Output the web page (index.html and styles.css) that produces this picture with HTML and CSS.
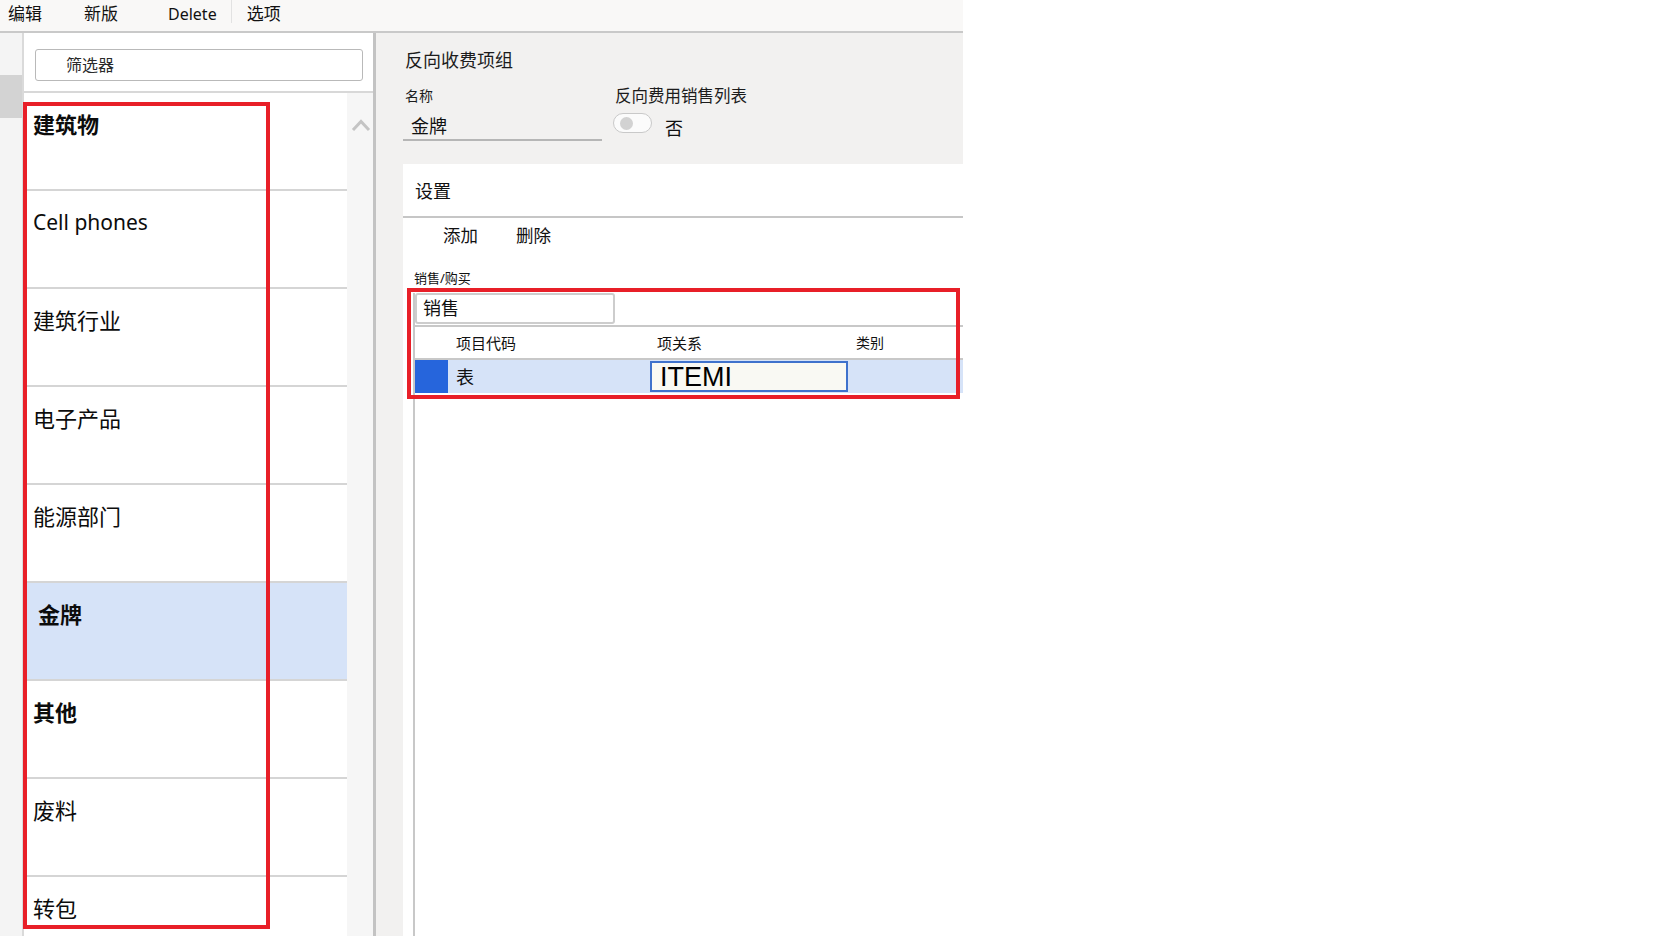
FILE: index.html
```html
<!DOCTYPE html>
<html lang="zh-CN">
<head>
<meta charset="utf-8">
<title>反向收费项组</title>
<link rel="stylesheet" href="styles.css">
</head>
<body>
<div class="app">
  <header class="topbar">
    <span class="tb-item tb-edit">编辑</span>
    <span class="tb-item tb-new">新版</span>
    <span class="tb-item tb-delete">Delete</span>
    <span class="tb-sep"></span>
    <span class="tb-item tb-options">选项</span>
  </header>

  <div class="main">
    <div class="rail"><div class="rail-mark"></div></div>

    <aside class="list-panel">
      <div class="filter">筛选器</div>
      <div class="list">
        <ul class="rows">
          <li class="row strong">建筑物</li>
          <li class="row latin">Cell phones</li>
          <li class="row">建筑行业</li>
          <li class="row">电子产品</li>
          <li class="row">能源部门</li>
          <li class="row strong selected">金牌</li>
          <li class="row strong">其他</li>
          <li class="row">废料</li>
          <li class="row">转包</li>
        </ul>
        <div class="scrollbar">
          <svg class="scroll-up" width="20" height="15" viewBox="0 0 20 15">
            <polyline points="2,12 10,3.5 18,12" fill="none" stroke="#c4c4c4" stroke-width="3"/>
          </svg>
        </div>
      </div>
    </aside>

    <section class="detail">
      <div class="head">
        <div class="head-title">反向收费项组</div>
        <div class="fields">
          <div class="field field-name">
            <div class="field-label">名称</div>
            <div class="field-value">金牌</div>
          </div>
          <div class="field field-toggle">
            <div class="field-label toggle-label">反向费用销售列表</div>
            <div class="toggle-row">
              <span class="toggle"><span class="knob"></span></span>
              <span class="toggle-text">否</span>
            </div>
          </div>
        </div>
      </div>

      <div class="card">
        <div class="card-title">设置</div>
        <div class="actions">
          <span class="action">添加</span>
          <span class="action">删除</span>
        </div>
        <div class="grid-caption">销售/购买</div>
        <div class="grid">
          <div class="grid-filter">
            <div class="dropdown">销售</div>
          </div>
          <div class="grid-head">
            <div class="col col-sel"></div>
            <div class="col col-code">项目代码</div>
            <div class="col col-rel">项关系</div>
            <div class="col col-cat">类别</div>
          </div>
          <div class="grid-row">
            <div class="col col-sel marker"></div>
            <div class="col col-code cell-text">表</div>
            <div class="col col-rel"><div class="cell-input">ITEMI</div></div>
            <div class="col col-cat"></div>
          </div>
        </div>
      </div>
    </section>
  </div>

  <div class="callout callout-list"></div>
  <div class="callout callout-grid"></div>
</div>
</body>
</html>
```

FILE: styles.css
```css
* {
  box-sizing: border-box;
}

html, body {
  margin: 0;
  padding: 0;
  background: #ffffff;
}

body {
  width: 1675px;
  height: 936px;
  overflow: hidden;
  font-family: "Noto Sans", "Noto Sans CJK SC", sans-serif;
  color: #111111;
}

.app {
  position: relative;
  width: 963px;
  height: 936px;
  display: flex;
  flex-direction: column;
}

/* ---------- command bar ---------- */
.topbar {
  height: 33px;
  flex: none;
  display: flex;
  align-items: flex-start;
  background: #f9f8f7;
  border-bottom: 2px solid #c9c9c9;
  font-size: 17px;
  line-height: 22px;
}

.tb-item {
  padding-top: 3px;
  white-space: nowrap;
}

.tb-edit { margin-left: 8px; }
.tb-new { margin-left: 42px; }
.tb-delete { margin-left: 50px; font-size: 16px; }
.tb-options { margin-left: 15px; }

.tb-sep {
  width: 1px;
  height: 23px;
  margin-left: 14px;
  background: #e2e2e2;
}

/* ---------- body ---------- */
.main {
  flex: 1;
  display: flex;
  min-height: 0;
}

.rail {
  width: 22px;
  flex: none;
  background: #f4f4f4;
}

.rail-mark {
  margin-top: 42px;
  height: 43px;
  background: #d3d3d3;
}

/* ---------- list panel ---------- */
.list-panel {
  width: 354px;
  flex: none;
  display: flex;
  flex-direction: column;
  background: #ffffff;
  border-left: 2px solid #dadada;
  border-right: 3px solid #c3c3c3;
}

.filter {
  margin: 16px 10px 0 11px;
  height: 32px;
  flex: none;
  border: 1px solid #b9b9b9;
  border-radius: 3px;
  padding-left: 30px;
  font-size: 16px;
  line-height: 30px;
  color: #2a2a2a;
}

.list {
  margin-top: 10px;
  flex: 1;
  min-height: 0;
  display: flex;
  border-top: 2px solid #d8d8d8;
  overflow: hidden;
}

.rows {
  list-style: none;
  margin: 0;
  padding: 0;
  width: 323px;
  flex: none;
  background: #ffffff;
}

.row {
  height: 98px;
  padding: 17px 0 0 9px;
  border-bottom: 2px solid #d5d5d5;
  font-size: 22px;
  line-height: 28px;
  font-weight: 400;
  color: #0c0c0c;
  white-space: nowrap;
}

.row.latin { font-size: 21px; }
.row.strong { font-weight: 700; }

.row.selected {
  background: #d6e3f8;
  padding-left: 14px;
}

.scrollbar {
  flex: 1;
  background: #f6f6f6;
}

.scroll-up {
  display: block;
  margin: 25px 0 0 4px;
}

/* ---------- detail ---------- */
.detail {
  flex: 1;
  min-width: 0;
  display: flex;
  flex-direction: column;
  background: #f2f1f0;
}

.head {
  height: 131px;
  flex: none;
  padding-left: 27px;
}

.head-title {
  margin-top: 15px;
  padding-left: 2px;
  font-size: 18px;
  line-height: 24px;
  color: #1c1c1c;
}

.fields {
  display: flex;
  margin-top: 14px;
}

.field-name {
  width: 199px;
}

.field-label {
  padding-left: 2px;
  font-size: 14px;
  line-height: 20px;
  color: #1c1c1c;
}

.field-value {
  margin-top: 7px;
  height: 28px;
  padding-left: 8px;
  font-size: 18px;
  line-height: 26px;
  border-bottom: 2px solid #b6b6b6;
}

.field-toggle {
  margin-left: 11px;
}

.toggle-label {
  font-size: 16.5px;
}

.toggle-row {
  display: flex;
  align-items: flex-start;
  margin-top: 7px;
}

.toggle {
  width: 39px;
  height: 20px;
  border: 1.5px solid #c9c9c9;
  border-radius: 10px;
  background: #fbfbfb;
  display: flex;
  align-items: center;
  padding-left: 5.5px;
}

.knob {
  width: 13px;
  height: 13px;
  border-radius: 50%;
  background: #d2d2d2;
}

.toggle-text {
  margin: 3px 0 0 13px;
  font-size: 18px;
  line-height: 24px;
}

/* ---------- settings card ---------- */
.card {
  flex: 1;
  margin-left: 27px;
  background: #ffffff;
  display: flex;
  flex-direction: column;
  min-height: 0;
}

.card-title {
  height: 54px;
  flex: none;
  padding: 15px 0 0 12px;
  font-size: 18px;
  line-height: 24px;
  border-bottom: 2px solid #c6c6c6;
}

.actions {
  display: flex;
  margin-top: 5px;
  padding-left: 40px;
  font-size: 17.5px;
  line-height: 24px;
}

.action + .action {
  margin-left: 38px;
}

.grid-caption {
  margin-top: 22px;
  padding-left: 11px;
  font-size: 13px;
  line-height: 18px;
}

.grid {
  flex: 1;
  margin: 6px 0 0 10px;
  border-left: 2px solid #c8c8c8;
  display: flex;
  flex-direction: column;
}

.grid-filter {
  height: 34px;
  flex: none;
  border-bottom: 2px solid #c8c8c8;
}

.dropdown {
  width: 200px;
  height: 31px;
  border: 2px solid #cdcdcd;
  border-radius: 3px;
  padding-left: 6px;
  font-size: 18px;
  line-height: 27px;
}

.grid-head,
.grid-row {
  display: flex;
  flex: none;
}

.grid-head {
  height: 33px;
  border-bottom: 2px solid #c8c8c8;
  align-items: center;
  font-size: 15px;
  line-height: 20px;
}

.grid-row {
  height: 33px;
  background: #d6e3f8;
  align-items: center;
}

.col {
  height: 100%;
  display: flex;
  align-items: center;
}

.col-sel { width: 33px; }
.col-code { width: 202px; padding-left: 8px; }
.col-rel { width: 198px; }
.col-cat { flex: 1; padding-left: 8px; }

.grid-head .col-rel { padding-left: 7px; }
.grid-head .col-cat { font-size: 14px; }

.marker {
  background: #2665dc;
}

.cell-text {
  font-size: 18px;
  line-height: 24px;
}

.cell-input {
  width: 198px;
  height: 31px;
  border: 2px solid #3f72cc;
  background: #f9f9f3;
  padding-left: 8px;
  font-family: "Liberation Sans", Arial, sans-serif;
  font-size: 27px;
  line-height: 29px;
  color: #000000;
}

/* ---------- red annotation frames ---------- */
.callout {
  position: absolute;
  border: 4px solid #e81f28;
  pointer-events: none;
}

.callout-list {
  left: 23px;
  top: 102px;
  width: 247px;
  height: 827px;
}

.callout-grid {
  left: 407px;
  top: 288px;
  width: 553px;
  height: 111px;
}
```
